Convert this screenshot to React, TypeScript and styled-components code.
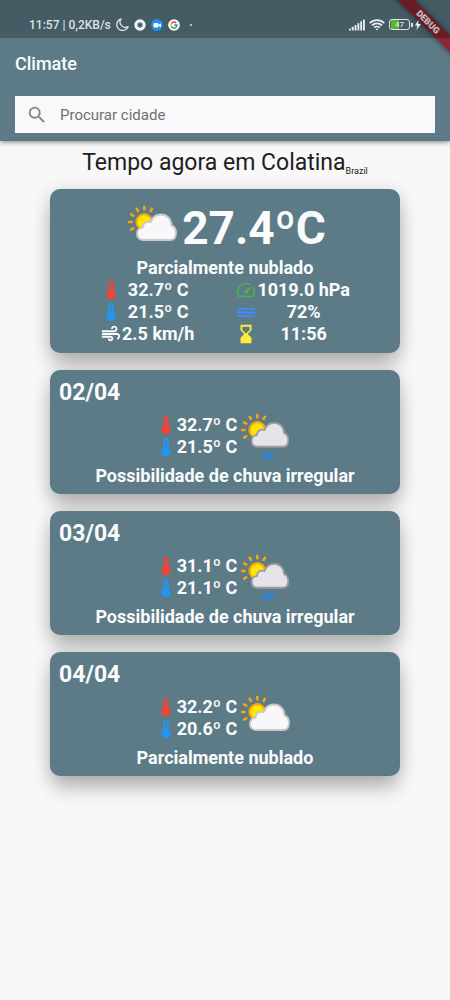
import React from "react";
import styled, { createGlobalStyle } from "styled-components";
import {
  MdAir,
  MdHourglassBottom,
  MdSearch,
  MdSpeed,
  MdThermostat,
  MdWater,
} from "react-icons/md";

const slate = "#5c7b87";
const paper = "#f8f8f9";

const GlobalStyle = createGlobalStyle`
  *, *::before, *::after { box-sizing: border-box; }
  body {
    margin: 0;
    background: ${paper};
    font-family: Roboto, "Liberation Sans", sans-serif;
  }
`;

const Page = styled.div`
  min-height: 100vh;
  padding-bottom: 60px;
  background: ${paper};
`;

const Header = styled.header`
  position: relative;
  overflow: hidden;
  padding-bottom: 8px;
  background: ${slate};
`;

const HeaderShadow = styled.div`
  box-shadow: 0 1px 5px rgba(0, 0, 0, 0.5);
`;

const StatusBar = styled.div`
  position: relative;
  z-index: 2;
  display: flex;
  align-items: center;
  justify-content: space-between;
  height: 38px;
  padding: 11px 28px 0 29px;
  background: rgba(0, 0, 0, 0.25);
  color: #dde3e6;
  font-size: 12px;
  font-weight: 500;
  line-height: 16px;
`;

const StatusGroup = styled.div<{ $gap: number }>`
  display: flex;
  align-items: center;
  gap: ${(p) => p.$gap}px;
`;

const DebugBanner = styled.div`
  position: absolute;
  z-index: 1;
  top: 16px;
  right: -38px;
  width: 120px;
  height: 12px;
  transform: rotate(45deg);
  background: #8e2631;
  box-shadow: 0 0 6px rgba(0, 0, 0, 0.5);
  color: #ffffff;
  font-size: 9px;
  font-weight: 900;
  line-height: 12px;
  text-align: center;
`;

const AppTitle = styled.h1`
  margin: 0;
  padding: 0 15px;
  color: #fafbfc;
  font-size: 18px;
  font-weight: 500;
  line-height: 52px;
`;

const SearchBox = styled.label`
  display: flex;
  align-items: center;
  gap: 12px;
  height: 37px;
  margin: 6px 15px 0;
  padding: 0 11px;
  background: #f9f9fb;
  color: #858585;
`;

const SearchInput = styled.input`
  flex: 1;
  min-width: 0;
  padding: 0;
  border: 0;
  outline: 0;
  background: transparent;
  color: #333333;
  font-family: inherit;
  font-size: 15px;
  line-height: 20px;

  &::placeholder {
    color: #707070;
    opacity: 1;
  }
`;

const Place = styled.div`
  display: flex;
  align-items: flex-end;
  justify-content: center;
  padding: 8px 0 12px;
  color: #202020;
`;

const PlaceTitle = styled.h2`
  margin: 0;
  font-size: 23px;
  font-weight: 400;
  line-height: 28px;
`;

const Country = styled.span`
  font-size: 9px;
  line-height: 11px;
`;

const Cards = styled.main`
  display: flex;
  flex-direction: column;
  gap: 17px;
  padding: 0 50px;
`;

const Card = styled.section<{ $top: number; $bottom: number }>`
  padding: ${(p) => p.$top}px 9px ${(p) => p.$bottom}px;
  border-radius: 10px;
  background: ${slate};
  box-shadow: 0 14px 20px -2px rgba(0, 0, 0, 0.24), 0 2px 18px rgba(0, 0, 0, 0.14);
  color: #fafbfc;
  font-size: 18px;
  font-weight: 700;
  line-height: 22px;
`;

const Row = styled.div`
  display: flex;
  align-items: center;
  justify-content: center;
`;

const BigTemperature = styled.div`
  font-size: 46px;
  line-height: 58px;
`;

const Caption = styled.p`
  margin: 0;
  text-align: center;
`;

const Readings = styled.div`
  display: flex;
  justify-content: center;
  gap: 41px;
`;

const ReadingColumn = styled.div`
  display: grid;
  grid-template-columns: 22px auto;
  justify-items: center;
  white-space: nowrap;

  svg {
    display: block;
  }
`;

const DateTitle = styled.h3`
  margin: 0;
  font-size: 23px;
  font-weight: 700;
  line-height: 28px;
`;

const ICON = 22;
const RED = "#f44336";
const BLUE = "#2196f3";

const Art = styled.svg`
  display: block;
  flex: none;
`;

function WeatherArt({ rain = false }: { rain?: boolean }) {
  return (
    <Art width="58" height="58" viewBox="0 0 58 58" aria-hidden="true">
      <g stroke="#f5a90c" strokeWidth="2.4">
        {[-120, -90, -60, -30, 0, 30].map((angle) => (
          <path key={angle} d="M20.3 11.4V6.8" transform={`rotate(${angle} 20.3 23)`} />
        ))}
      </g>
      <circle cx="20.3" cy="23" r="7.8" fill="#ffe800" stroke="#f9a512" strokeWidth="2.2" />
      <g transform={rain ? "translate(2.4 1.2) scale(.94)" : undefined}>
        <path
          d="M19.5 41C15 41 13 38 13 34.7C13 31.4 15.5 28.8 18.7 28.5C18.7 24.3 22.5 21.9 26.7 23.2C28.3 18.4 32 15.5 37 15.5C43 15.5 47.5 20.2 47.5 26.5C50.5 27.5 52 30.7 52 34C52 38.5 49.5 41 46 41Z"
          fill={rain ? "#e3e3e8" : "#f8f8fb"}
          stroke={rain ? "#9b9b9f" : "#c9c9cb"}
          strokeWidth="1.9"
          strokeLinejoin="round"
        />
      </g>
      {rain && (
        <g fill="#1f88ee">
          <path d="M28.6 44.5H31L29.4 48.4H31L25.8 53.2L26.6 50H25.2Z" />
          <path d="M34.6 44.5H37L35.4 48.4H36.4L31.2 53.2L32 50H31.2Z" />
        </g>
      )}
    </Art>
  );
}

function NotificationIcons() {
  return (
    <>
      <svg width="13" height="13" viewBox="0 0 13 13" fill="none" stroke="#dde3e6" strokeWidth="1.3" strokeLinejoin="round" aria-hidden="true">
        <path d="M5 .9A5.9 5.9 0 1 0 12.2 8.6A5.4 5.4 0 0 1 5 .9Z" />
      </svg>
      <svg width="46" height="12" viewBox="0 0 46 12" aria-hidden="true">
        <circle cx="6" cy="6" r="5.7" fill="#f3f5f7" />
        <path d="M6 3L8.600 4.500V7.500L6 9L3.400 7.500V4.500Z" fill="#60758b" />
        <circle cx="6" cy="6" r="1.1" fill="#34465b" />
        <circle cx="23" cy="6" r="5.9" fill="#1d8ff0" />
        <rect x="19.5" y="4" width="5" height="4.5" rx="1" fill="#fff" />
        <path d="M24.5 5.8L27 4.3V8.2L24.5 6.8Z" fill="#fff" />
        <circle cx="40" cy="6" r="5.8" fill="#fff" />
        <g fill="none" strokeWidth="1.5">
          <path d="M42.2 3.9A3 3 0 0 0 37.3 4.7" stroke="#ea4335" />
          <path d="M37.3 4.7A3 3 0 0 0 37.3 7.3" stroke="#fbbc05" />
          <path d="M37.3 7.3A3 3 0 0 0 41.9 8.3" stroke="#34a853" />
          <path d="M41.9 8.3A3 3 0 0 0 43 6H40" stroke="#4285f4" />
        </g>
      </svg>
    </>
  );
}

const Dot = styled.span`
  width: 2px;
  height: 2px;
  margin-left: 5px;
  border-radius: 1px;
  background: #dde3e6;
`;

const BatteryBox = styled.span`
  display: flex;
  align-items: center;
  justify-content: center;
  width: 21px;
  height: 11px;
  border: 1px solid #dde3e6;
  border-radius: 3px;
  background: linear-gradient(90deg, transparent 1px, #55b928 1px 9px, transparent 9px);
  font-size: 8px;
  line-height: 9px;
`;

const BatteryTip = styled.span`
  width: 2px;
  height: 4px;
  margin-left: 1px;
  background: #dde3e6;
`;

const Battery = styled.div`
  display: flex;
  align-items: center;
`;

function SystemIcons() {
  return (
    <>
      <svg width="16" height="12" viewBox="0 0 16 12" fill="#e5eaed" aria-hidden="true">
        {[0, 1, 2, 3, 4, 5].map((i) => (
          <rect key={i} x={i * 2.8} y={9.5 - i * 1.8} width="1.9" height={2 + i * 1.8} rx=".6" />
        ))}
      </svg>
      <svg width="16" height="12" viewBox="0 0 16 12" fill="none" stroke="#e5eaed" strokeWidth="1.8" aria-hidden="true">
        <path d="M.8 4.2A10.2 10.2 0 0 1 15.2 4.2M3 6.5A7 7 0 0 1 13 6.5M5.2 8.7A4 4 0 0 1 10.8 8.7" />
        <path d="M6.5 9.9Q8 8.9 9.5 9.9L8 11.5Z" fill="#e5eaed" stroke="none" />
      </svg>
      <Battery>
        <BatteryBox>47</BatteryBox>
        <BatteryTip />
        <svg width="9" height="10" viewBox="0 0 9 10" fill="#f3f5f6" aria-hidden="true">
          <path d="M5.500 0L2 5.600H4.300L3.500 10L7.800 4.100H5.200Z" />
        </svg>
      </Battery>
    </>
  );
}

type Day = { date: string; max: string; min: string; text: string; rain: boolean };

const days: Day[] = [
  { date: "02/04", max: "32.7º C", min: "21.5º C", text: "Possibilidade de chuva irregular", rain: true },
  { date: "03/04", max: "31.1º C", min: "21.1º C", text: "Possibilidade de chuva irregular", rain: true },
  { date: "04/04", max: "32.2º C", min: "20.6º C", text: "Parcialmente nublado", rain: false },
];

function ForecastCard({ day }: { day: Day }) {
  return (
    <Card $top={9} $bottom={7}>
      <DateTitle>{day.date}</DateTitle>
      <Row>
        <ReadingColumn>
          <MdThermostat size={ICON} color={RED} />
          <span>{day.max}</span>
          <MdThermostat size={ICON} color={BLUE} />
          <span>{day.min}</span>
        </ReadingColumn>
        <WeatherArt rain={day.rain} />
      </Row>
      <Caption>{day.text}</Caption>
    </Card>
  );
}

export default function App() {
  return (
    <Page>
      <GlobalStyle />
      <HeaderShadow>
        <Header>
          <StatusBar>
            <StatusGroup $gap={5}>
              <span>11:57 | 0,2KB/s</span>
              <NotificationIcons />
              <Dot />
            </StatusGroup>
            <StatusGroup $gap={4}>
              <SystemIcons />
            </StatusGroup>
          </StatusBar>
          <DebugBanner>DEBUG</DebugBanner>
          <AppTitle>Climate</AppTitle>
          <SearchBox>
            <MdSearch size={22} aria-hidden="true" />
            <SearchInput type="text" placeholder="Procurar cidade" aria-label="Procurar cidade" />
          </SearchBox>
        </Header>
      </HeaderShadow>
      <Place>
        <PlaceTitle>Tempo agora em Colatina</PlaceTitle>
        <Country>Brazil</Country>
      </Place>
      <Cards>
        <Card $top={10} $bottom={8}>
          <Row>
            <WeatherArt />
            <BigTemperature>27.4ºC</BigTemperature>
          </Row>
          <Caption>Parcialmente nublado</Caption>
          <Readings>
            <ReadingColumn>
              <MdThermostat size={ICON} color={RED} />
              <span>32.7º C</span>
              <MdThermostat size={ICON} color={BLUE} />
              <span>21.5º C</span>
              <MdAir size={ICON} />
              <span>2.5 km/h</span>
            </ReadingColumn>
            <ReadingColumn>
              <MdSpeed size={ICON} color="#4caf50" />
              <span>1019.0 hPa</span>
              <MdWater size={ICON} color="#448aff" />
              <span>72%</span>
              <MdHourglassBottom size={ICON} color="#ffeb3b" />
              <span>11:56</span>
            </ReadingColumn>
          </Readings>
        </Card>
        {days.map((day) => (
          <ForecastCard key={day.date} day={day} />
        ))}
      </Cards>
    </Page>
  );
}
